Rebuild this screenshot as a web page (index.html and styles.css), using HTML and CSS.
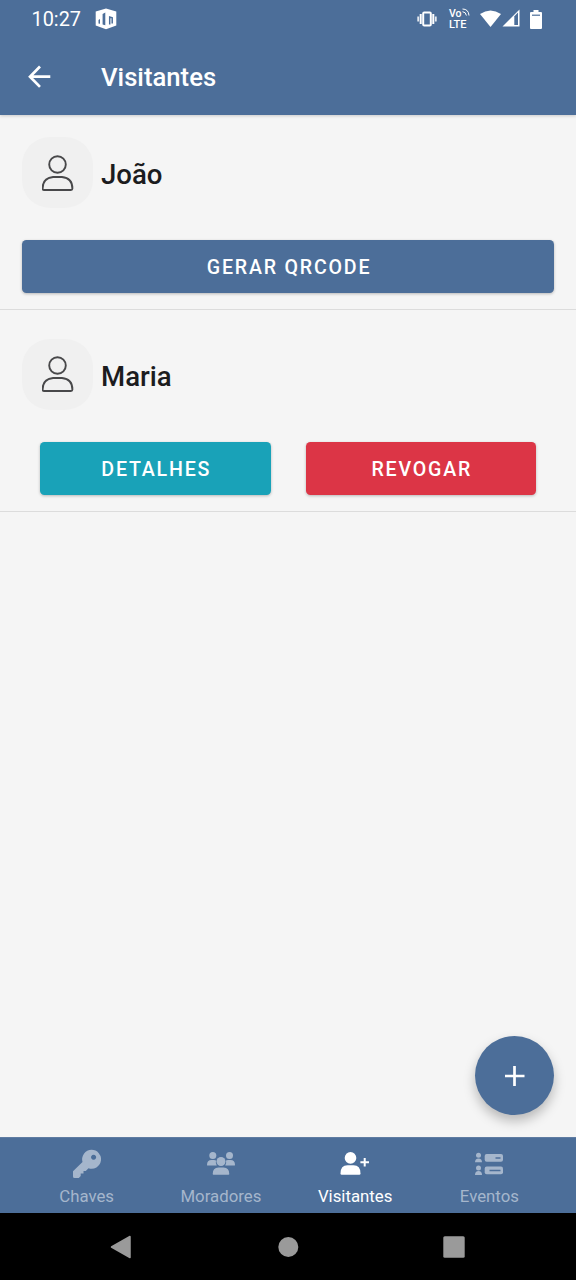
FILE: index.html
```html
<!DOCTYPE html>
<html lang="pt-BR">
<head>
<meta charset="utf-8">
<title>Visitantes</title>
<link rel="stylesheet" href="styles.css">
</head>
<body>
<div class="screen">
  <header class="header">
    <div class="status">
      <span class="clock">10:27</span>
      <svg class="app-badge" width="22" height="22" viewBox="0 0 22 22">
        <path d="M11 .5 21.300 3.500V17.500L11 21.300.7 17.500V3.500Z" fill="#fff"/>
        <path d="M3.500 15.500V12L5 11V15.800ZM7.600 16.500V6L10.300 4.500V17.300Z" fill="#4c6e99"/>
        <path d="M14.700 16.500V9L17.200 9.800V15.500" fill="none" stroke="#4c6e99" stroke-width="1.500"/>
      </svg>
      <span class="status-icons">
        <svg width="20" height="16" viewBox="0 0 20 16" fill="none" stroke="#fff">
          <rect x="6.200" y="1.600" width="7.600" height="12.800" rx="1" stroke-width="2"/>
          <path d="M3.700 3v10M16.300 3v10" stroke-width="2"/><path d="M1.200 5.500v5M18.800 5.500v5" stroke-width="1.800" stroke-opacity=".85"/>
        </svg>
        <span class="volte"><span class="vo">Vo<svg width="8" height="8" viewBox="0 0 8 8" fill="none" stroke="#fff"><path d="M.5 1Q6.500 1 7 7.500M.5 3.700Q4 4 4.400 7.500" stroke-width="1"/></svg></span><span>LTE</span></span>
        <svg class="wifi" width="21" height="17" viewBox="0 0 21 17"><path d="M0 4Q10.500-3 21 4L10.500 17Z" fill="#fff"/></svg>
        <svg class="signal" width="18" height="18" viewBox="0 0 18 18"><path d="M17.500.5V17.500H.5Z" fill="#fff"/><path d="M12.300 7.300 16 3.500V16H12.300Z" fill="#4c6e99"/></svg>
        <svg class="battery" width="12" height="19" viewBox="0 0 12 19"><path d="M3.500 0h5v2H11q1 0 1 1v15q0 1-1 1H1q-1 0-1-1V3q0-1 1-1h2.500Z" fill="#fff"/><path d="M2 5.200h8" stroke="#4c6e99" stroke-width="1.200"/></svg>
      </span>
    </div>
    <div class="appbar">
      <svg width="23" height="23" viewBox="0 0 23 23" fill="none" stroke="#fff" stroke-width="2.700"><path d="M12 1.500 2 11.700 12 21.900M2 11.700H22.300"/></svg>
      <h1 class="title">Visitantes</h1>
    </div>
  </header>

  <main class="list">
    <section class="visitor first">
      <div class="person">
        <span class="avatar"><svg width="32" height="36" viewBox="0 0 32 36" fill="none" stroke="#48484a" stroke-width="1.900"><circle cx="15.500" cy="9.500" r="8.300"/><path d="M11 22H20Q30.400 23 30.400 33.500Q30.400 35 28.900 35H2.100Q.6 35 .6 33.500Q.6 23 11 22Z"/></svg></span>
        <span class="name">João</span>
      </div>
      <div class="actions"><button class="button primary">GERAR QRCODE</button></div>
    </section>
    <section class="visitor second">
      <div class="person">
        <span class="avatar"><svg width="32" height="36" viewBox="0 0 32 36" fill="none" stroke="#48484a" stroke-width="1.900"><circle cx="15.500" cy="9.500" r="8.300"/><path d="M11 22H20Q30.400 23 30.400 33.500Q30.400 35 28.900 35H2.100Q.6 35 .6 33.500Q.6 23 11 22Z"/></svg></span>
        <span class="name">Maria</span>
      </div>
      <div class="actions pair"><button class="button info">DETALHES</button><button class="button danger">REVOGAR</button></div>
    </section>
  </main>

  <button class="fab" aria-label="Adicionar"><svg width="20" height="20" viewBox="0 0 20 20"><path d="M9.500 0V20M0 10H19.500" stroke="#fff" stroke-width="2.700"/></svg></button>

  <nav class="tabs">
    <a class="tab">
      <svg width="28" height="30" viewBox="0 0 28 30"><path fill="currentColor" fill-rule="evenodd" d="M18.500.8a9.500 9.500 0 1 1-3 18.500L12.800 22H10.500v2.500H7.700V27L5.800 29H1.500Q0 29 0 27.500V22.300L9.500 13A9.500 9.500 0 0 1 18.500.8ZM20.600 5.800a2.500 2.500 0 1 0 .01 0Z"/></svg>
      <span>Chaves</span>
    </a>
    <a class="tab">
      <svg width="28" height="30" viewBox="0 0 28 30" fill="currentColor"><circle cx="5.800" cy="6.500" r="3.500"/><circle cx="22.500" cy="6.500" r="3.500"/><circle cx="14" cy="12.500" r="4.500"/><path d="M0 16Q0 11 4.500 11H7Q8.200 11 9 11.500Q8.300 14.200 9.800 16.600H.7Q0 16.600 0 16ZM28 16Q28 11 23.500 11H21Q19.800 11 19 11.500Q19.700 14.200 18.200 16.600H27.300Q28 16.600 28 16ZM5.700 25Q5.700 18.500 11.500 18.500H16.500Q22.300 18.500 22.300 25Q22.300 25.800 21.500 25.800H6.500Q5.700 25.800 5.700 25Z"/></svg>
      <span>Moradores</span>
    </a>
    <a class="tab active">
      <svg width="30" height="30" viewBox="0 0 30 30" fill="currentColor"><circle cx="10.500" cy="8.900" r="5.800"/><path d="M.5 24.500Q.5 16.300 7.500 16.300H13.500Q20.500 16.300 20.500 24.500Q20.500 25.800 19.300 25.800H1.700Q.5 25.800 .5 24.500Z"/><path d="M24.700 9V17.600M20.400 13.300H29" stroke="currentColor" stroke-width="2"/></svg>
      <span>Visitantes</span>
    </a>
    <a class="tab">
      <svg width="28" height="30" viewBox="0 0 28 30" fill="currentColor"><circle cx="3.500" cy="6.300" r="2.500"/><path d="M0 13.300Q0 9.500 3.500 9.500T7 13.300Z"/><circle cx="3.500" cy="18.900" r="2.500"/><path d="M0 25.900Q0 22.100 3.500 22.100T7 25.900Z"/><rect x="9.700" y="5" width="18.300" height="7.800" rx="2"/><rect x="9.700" y="17.500" width="18.300" height="7.800" rx="2"/><path d="M20.500 8.900h5M14.500 21.400h11" stroke="#4c6e99" stroke-width="1.500"/></svg>
      <span>Eventos</span>
    </a>
  </nav>

  <footer class="system-nav">
    <svg width="22" height="24" viewBox="0 0 22 24"><path d="M1.500 12 20 1.500V22.500Z" fill="#9a9a9a" stroke="#9a9a9a" stroke-width="1.500" stroke-linejoin="round"/></svg>
    <svg width="22" height="22" viewBox="0 0 22 22"><circle cx="11.300" cy="11" r="10" fill="#9a9a9a"/></svg>
    <svg width="22" height="22" viewBox="0 0 22 22"><rect x=".3" y=".3" width="21.400" height="21.400" rx="1.500" fill="#9a9a9a"/></svg>
  </footer>
</div>
</body>
</html>
```

FILE: styles.css
```css
* { box-sizing: border-box; }
body { margin: 0; font-family: Roboto, "Noto Sans", sans-serif; background: #f5f5f5; }
svg { display: block; flex: none; }
button { border: 0; padding: 0; font-family: inherit; }
.screen { position: relative; width: 576px; height: 1280px; display: flex; flex-direction: column; overflow: hidden; }
.header { height: 115px; background: #4c6e99; color: #fff; box-shadow: 0 1px 3px rgba(0, 0, 0, .18); }
.status { height: 38px; display: flex; align-items: center; padding: 0 34px 0 31.5px; }
.clock { width: 63.5px; font-size: 19.9px; line-height: 38px; padding-top: 1px; }
.app-badge { margin-bottom: 1px; }
.status-icons { margin-left: auto; display: flex; align-items: center; }
.volte { width: 22px; margin: 0 9px 0 12px; font-size: 11px; line-height: 11px; font-weight: 500; display: flex; flex-direction: column; padding-bottom: 1px; }
.vo { display: flex; gap: 1px; font-size: 10.5px; letter-spacing: -.1px; }
.wifi { margin: 0 1px 2px 0; }
.signal { margin: 0 10px 2px 0; }
.appbar { height: 77px; padding-left: 28px; display: flex; align-items: center; gap: 50px; }
.title { margin: 0; font-size: 25.7px; line-height: 32px; padding-top: 1px; font-weight: 500; }
.list { flex: 1; }
.visitor { padding: 22px 22px 0; border-bottom: 1px solid #dcdcdc; }
.first { height: 195px; }
.second { height: 202px; padding-top: 28.5px; }
.person { display: flex; align-items: center; gap: 8px; }
.avatar { width: 71px; height: 71px; border-radius: 28px; background: #f0f0f0; display: flex; align-items: center; justify-content: center; }
.name { font-size: 27.6px; line-height: 34px; padding-top: 5px; font-weight: 500; color: #1c1c1e; }
.actions { display: flex; margin-top: 32px; }
.pair { padding: 0 18px; gap: 35px; }
.button { flex: 1; height: 53px; border-radius: 4.5px; color: #fff; font-size: 19.6px; line-height: 26px; letter-spacing: 1.8px; font-weight: 500; padding: 3px 0 0 2px; box-shadow: 0 1px 3px rgba(0, 0, 0, .25); }
.primary { background: #4c6e99; }
.info { background: #19a2b8; }
.danger { background: #dc3546; }
.fab { position: absolute; right: 22px; bottom: 165px; width: 79px; height: 79px; border-radius: 50%; background: #4c6e99; display: flex; align-items: center; justify-content: center; box-shadow: 0 6px 12px rgba(0, 0, 0, .25); }
.tabs { height: 76px; background: #4c6e99; border-top: 1px solid #5f7ca2; display: flex; padding: 0 19.5px; }
.tab { flex: 1; color: #a5b6cc; display: flex; flex-direction: column; align-items: center; padding-top: 11px; font-size: 16.8px; line-height: 22px; }
.tab span { margin-top: 6px; }
.active { color: #fff; }
.system-nav { height: 67px; background: #000; display: flex; align-items: center; justify-content: space-between; padding: 0 111px 0 110px; }
```
